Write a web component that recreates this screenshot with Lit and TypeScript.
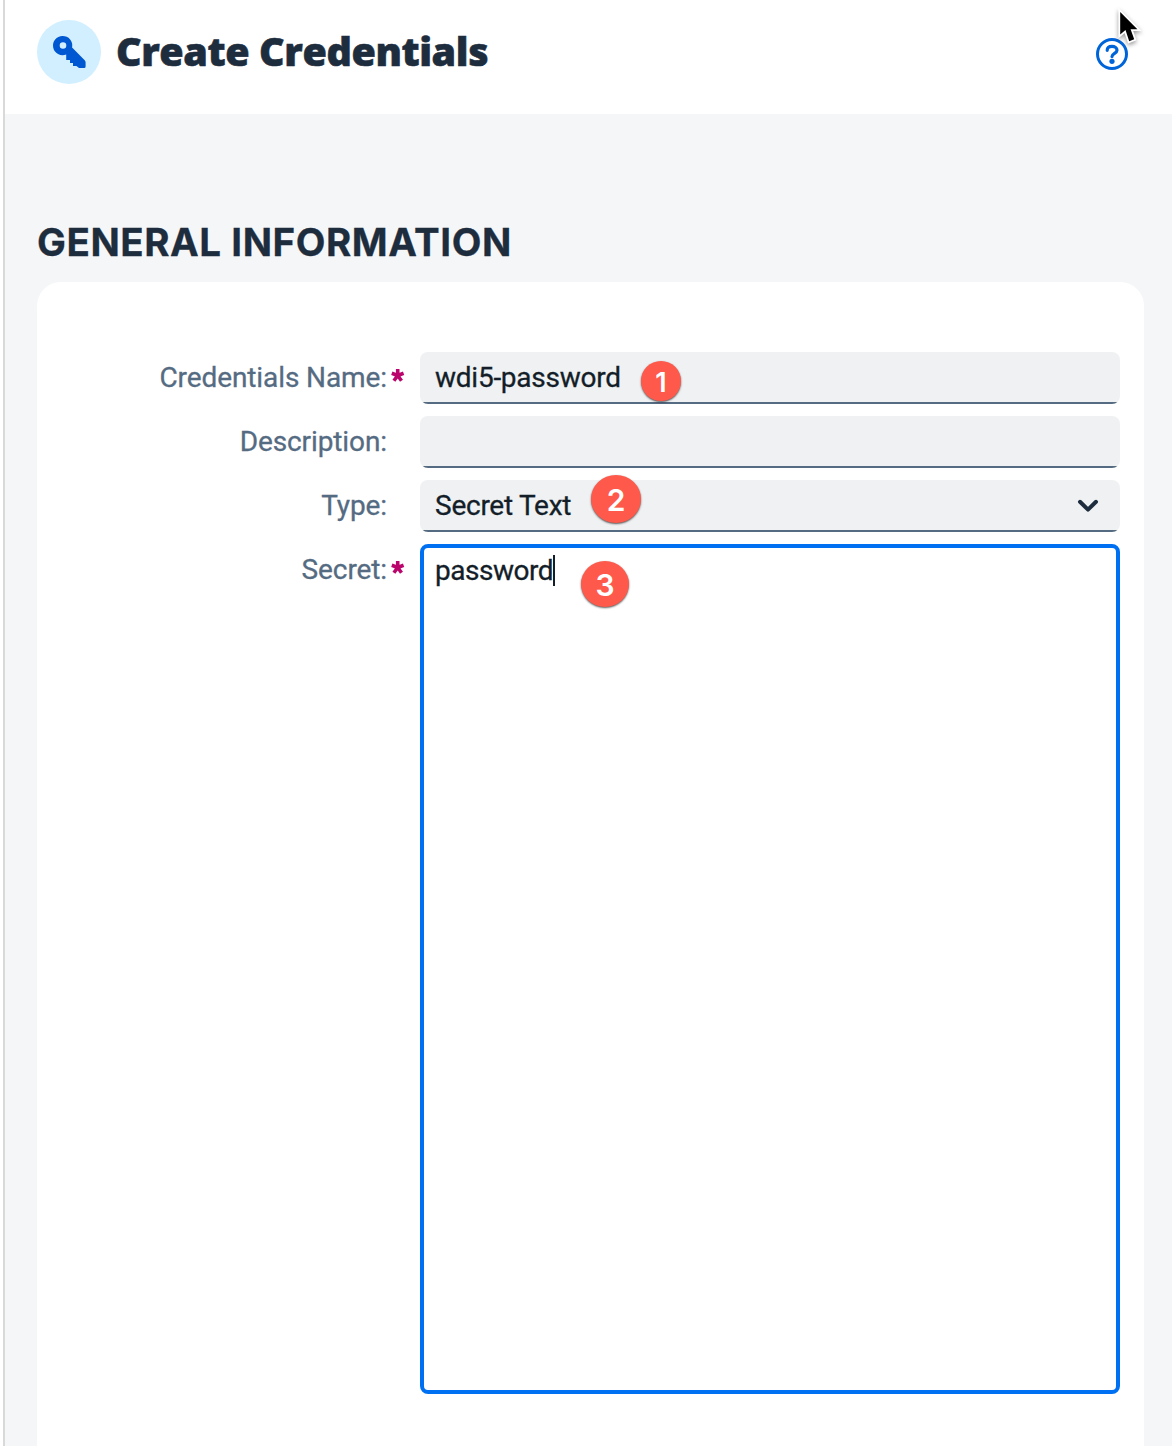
import { LitElement, html, css, nothing } from "lit";
import { customElement, property } from "lit/decorators.js";

@customElement("step-badge")
class StepBadge extends LitElement {
  @property({ type: Number }) step = 1;

  static styles = css`
    :host {
      display: flex;
      align-items: center;
      justify-content: center;
      border-radius: 50%;
      background: #ff594b;
      color: #fff;
      font: 600 30px/1 Inter, "Liberation Sans", sans-serif;
      box-shadow: 0 1px 2px rgba(0, 0, 0, 0.65);
    }
    span {
      padding-top: 2px;
    }
  `;

  render() {
    return html`<span>${this.step}</span>`;
  }
}

@customElement("form-row")
class FormRow extends LitElement {
  @property() label = "";
  @property({ type: Boolean }) required = false;

  static styles = css`
    :host {
      display: grid;
      grid-template-columns: 350px 700px;
      column-gap: 33px;
      font-family: Roboto, "Liberation Sans", sans-serif;
    }
    .label {
      display: flex;
      justify-content: flex-end;
      height: 52px;
      font-size: 28px;
      line-height: 52px;
      letter-spacing: -0.1px;
      color: #556b82;
      -webkit-text-stroke: 0.3px #556b82;
      white-space: nowrap;
      position: relative;
    }
    .mark {
      position: absolute;
      left: 354px;
      top: 17px;
      width: 13px;
      height: 14px;
      overflow: visible;
    }
  `;

  render() {
    return html`
      <div class="label">
        <span>${this.label}:</span>
        ${this.required
          ? html`<svg class="mark" viewBox="0 0 13 14">
              <path d="M6.7 6.5V0M6.7 6.5L0.8 4.3M6.7 6.5L12.6 4.3M6.7 6.5L2.9 11.8M6.7 6.5L10.5 11.8" stroke="#ba066c" stroke-width="3.6" fill="none" />
            </svg>`
          : nothing}
      </div>
      <slot></slot>
    `;
  }
}

@customElement("app-root")
class AppRoot extends LitElement {
  static styles = css`
    :host {
      display: block;
      height: 1446px;
      overflow: hidden;
      position: relative;
      background: #fff;
      font-family: Roboto, "Liberation Sans", sans-serif;
      color: #1d2d3e;
    }
    .page {
      box-sizing: border-box;
      height: 1446px;
      margin-left: 3px;
      border-left: 2px solid #d9d9d9;
      background: #f5f6f7;
      overflow: hidden;
    }
    .header {
      box-sizing: border-box;
      display: flex;
      align-items: center;
      height: 114px;
      padding: 0 44px 10px 32px;
      background: #fff;
    }
    .avatar {
      width: 64px;
      height: 64px;
      border-radius: 50%;
      background: #d1efff;
    }
    .avatar svg {
      display: block;
    }
    .title {
      flex: 1;
      margin: 0 0 2px 15px;
      font-family: "Open Sans", "Noto Sans", sans-serif;
      font-size: 39.5px;
      line-height: 48px;
      font-weight: 800;
      letter-spacing: -0.42px;
      -webkit-text-stroke: 0.6px #1d2d3e;
      white-space: nowrap;
    }
    .help {
      width: 32px;
      height: 32px;
      margin-top: 4px;
    }
    .heading {
      margin: 104px 0 0 32px;
      font-family: Inter, Roboto, sans-serif;
      font-size: 38.5px;
      line-height: 48px;
      height: 48px;
      font-weight: 700;
      letter-spacing: 0.55px;
      -webkit-text-stroke: 0.3px #1d2d3e;
      white-space: nowrap;
    }
    .card {
      box-sizing: border-box;
      display: flex;
      flex-direction: column;
      gap: 12px;
      width: 1107px;
      height: 1186px;
      margin: 16px 0 0 32px;
      padding-top: 70px;
      border-radius: 24px;
      background: #fff;
    }
    .field {
      box-sizing: border-box;
      position: relative;
      display: flex;
      align-items: center;
      justify-content: space-between;
      height: 52px;
      padding: 0 20px 0 15px;
      border-radius: 8px;
      background: linear-gradient(#556b82, #556b82) 0 100% / 100% 2px no-repeat #eff1f2;
      font-size: 28px;
      line-height: 52px;
      letter-spacing: -0.25px;
      color: #131e29;
    }
    .area {
      box-sizing: border-box;
      position: relative;
      display: flex;
      align-items: flex-start;
      height: 850px;
      padding: 7px 11px;
      border: 4px solid #0070f2;
      border-radius: 8px;
      font-size: 28px;
      line-height: 32px;
      letter-spacing: -0.48px;
      color: #131e29;
    }
    .value {
      -webkit-text-stroke: 0.3px #131e29;
    }
    .caret {
      width: 2px;
      height: 31px;
      background: #131e29;
    }
    .one, .two, .three {
      position: absolute;
      letter-spacing: 0;
    }
    .one { left: 221px; top: 9px; width: 40px; height: 40px; font-size: 27px; }
    .two { left: 171px; top: -5px; width: 50px; height: 48px; }
    .three { left: 157px; top: 13px; width: 48px; height: 46px; }
    .cursor {
      position: absolute;
      left: 1114px;
      top: 6px;
      width: 32px;
      height: 44px;
    }
    .arrow {
      filter: drop-shadow(0 2px 2px rgba(0, 0, 0, 0.4));
    }
  `;

  render() {
    return html`
      <div class="page">
        <header class="header">
          <div class="avatar">
            <svg width="64" height="64" viewBox="0 0 64 64">
              <path fill="#0057d2" fill-rule="evenodd" d="M25.5 16a9.6 9.6 0 0 1 9.6 11.6L47.7 40.2Q48.6 41.2 48.6 42.6V46.5Q48.6 48 47.1 48H42L39.4 46H36V43H33V40H29.2V34.5A9.6 9.6 0 1 1 25.5 16ZM26 22.2a3.3 3.3 0 1 0 0 6.6a3.3 3.3 0 0 0 0-6.6Z" />
            </svg>
          </div>
          <h1 class="title">Create Credentials</h1>
          <svg class="help" viewBox="0 0 32 32" fill="none" stroke="#0064d9">
            <circle cx="16" cy="16" r="14.5" stroke-width="3" />
            <path d="M11.2 12.3C11.2 9.8 13.2 8.3 16 8.3S21 10 21 12.3C21 15.4 16 15.3 16 18.6" stroke-width="3.2" stroke-linecap="round" />
            <circle cx="16" cy="23.3" r="2.6" fill="#0064d9" stroke="none" />
          </svg>
        </header>
        <h2 class="heading">GENERAL INFORMATION</h2>
        <section class="card">
          <form-row label="Credentials Name" required>
            <div class="field"><span class="value">wdi5-password</span><step-badge class="one" .step=${1}></step-badge></div>
          </form-row>
          <form-row label="Description"><div class="field"></div></form-row>
          <form-row label="Type">
            <div class="field">
              <span class="value">Secret Text</span>
              <svg width="24" height="24" viewBox="0 0 24 24" fill="none" stroke="#1d2d3e" stroke-width="4" stroke-linecap="round" stroke-linejoin="round">
                <path d="M4 7.8L12 15.6L20 7.8" />
              </svg>
              <step-badge class="two" .step=${2}></step-badge>
            </div>
          </form-row>
          <form-row label="Secret" required>
            <div class="area"><span class="value">password</span><i class="caret"></i><step-badge class="three" .step=${3}></step-badge></div>
          </form-row>
        </section>
      </div>
      <svg class="cursor" viewBox="0 0 32 44">
        <path class="arrow" d="M6.2 6V28.4L11.5 24L15.2 35.2L20.2 33.2L16.6 23.2H23.4Z" fill="#000" stroke="#fff" stroke-width="3.6" paint-order="stroke" />
      </svg>
    `;
  }
}
